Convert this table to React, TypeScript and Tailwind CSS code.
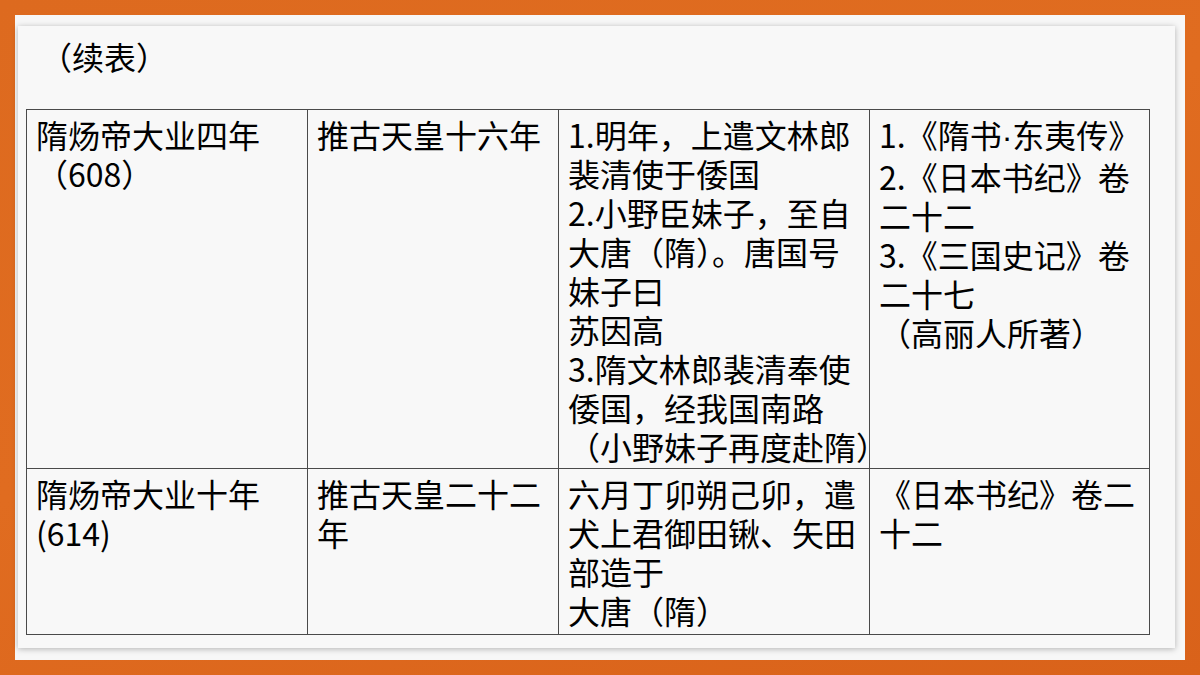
const Dot = () => <span style={{ fontFamily: '"Liberation Sans", sans-serif' }}>·</span>;

const rows = [
  {
    h: 'h-[359px]',
    cells: [
      ['隋炀帝大业四年', '（608）'],
      ['推古天皇十六年'],
      [
        '1.明年，上遣文林郎',
        '裴清使于倭国',
        '2.小野臣妹子，至自',
        '大唐（隋）。唐国号',
        '妹子曰',
        '苏因高',
        '3.隋文林郎裴清奉使',
        '倭国，经我国南路',
        '（小野妹子再度赴隋）',
      ],
      [
        <>
          1.《隋书<Dot />东夷传》
        </>,
        '2.《日本书纪》卷',
        '二十二',
        '3.《三国史记》卷',
        '二十七',
        '（高丽人所著）',
      ],
    ],
  },
  {
    h: 'h-[166px]',
    cells: [
      ['隋炀帝大业十年', '(614)'],
      ['推古天皇二十二', '年'],
      ['六月丁卯朔己卯，遣', '犬上君御田锹、矢田', '部造于', '大唐（隋）'],
      ['《日本书纪》卷二', '十二'],
    ],
  },
];

const widths = ['w-[281px]', 'w-[251px]', 'w-[311px]', 'w-[280px]'];

export default function App() {
  return (
    <div
      className="w-[1200px] h-[675px] bg-[linear-gradient(160deg,#dd6a1f_0%,#e06c20_45%,#d9621a_100%)] p-[15px] text-black"
      style={{ fontFamily: '"Noto Sans CJK SC", "Noto Sans", sans-serif' }}
    >
      <div className="w-[1170px] h-[645px] bg-[#f7f7f7] pt-[11px] pl-[3px] pr-[10px] pb-[12px]">
        <div className="h-full bg-[#f8f8f8] shadow-[0_1px_6px_rgba(0,0,0,0.28)] pl-[8px] flex flex-col">
          <div className="ml-[14px] mt-[11px] h-[39px] text-[32px] leading-[39px]">（续表）</div>
          <table className="mt-[33px] border-collapse table-fixed w-[1122px]">
            <tbody>
              {rows.map((row, ri) => (
                <tr key={ri} className={row.h}>
                  {row.cells.map((lines, ci) => (
                    <td
                      key={ci}
                      className={`${widths[ci]} border border-[#4a4a4a] align-top pl-[9px] pt-[5px] p-0 overflow-hidden`}
                    >
                      {lines.map((l, li) => (
                        <div key={li} className="whitespace-nowrap text-[32px] leading-[39px]">
                          {l}
                        </div>
                      ))}
                    </td>
                  ))}
                </tr>
              ))}
            </tbody>
          </table>
        </div>
      </div>
    </div>
  );
}
